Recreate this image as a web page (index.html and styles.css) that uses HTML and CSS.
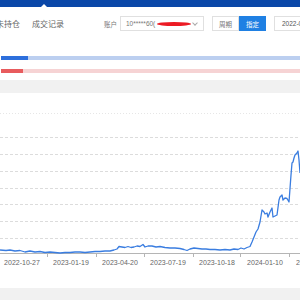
FILE: index.html
```html
<!DOCTYPE html>
<html lang="zh-CN">
<head>
  <meta charset="UTF-8">
  <meta name="viewport" content="width=device-width, initial-scale=1.0">
  <title>成交记录</title>
  <link rel="stylesheet" href="styles.css">
</head>
<body>

  <!-- Barra superior -->
  <div class="topbar">
    <span class="notch"></span>
  </div>

  <!-- Abas e filtros -->
  <div class="toolbar">
    <div class="tabs">
      <span class="tab">未持仓</span>
      <span class="tab">成交记录</span>
    </div>
    <span class="label">账户</span>
    <div class="select">
      <span class="select-text">10*****60(</span>
      <span class="redact"></span>
      <span class="chevron"></span>
    </div>
    <div class="btn-group">
      <button class="btn">周期</button>
      <button class="btn active">指定</button>
    </div>
    <div class="date-input">2022-01-01</div>
  </div>

  <!-- Barras de progresso -->
  <div class="progress">
    <div class="bar blue"><span class="fill" style="width: 27px"></span></div>
    <div class="bar red"><span class="fill" style="width: 22px"></span></div>
  </div>

  <div class="gap"></div>

  <!-- Gráfico -->
  <div class="chart">
    <svg width="300" height="195" viewBox="0 93 300 195">
      <line class="grid-top" x1="0" y1="113.5" x2="300" y2="113.5"/>
      <g class="grid">
        <line x1="0" y1="137.5" x2="300" y2="137.5"/>
        <line x1="0" y1="154.5" x2="300" y2="154.5"/>
        <line x1="0" y1="171.5" x2="300" y2="171.5"/>
        <line x1="0" y1="188.5" x2="300" y2="188.5"/>
        <line x1="0" y1="204.5" x2="300" y2="204.5"/>
        <line x1="0" y1="221.5" x2="300" y2="221.5"/>
        <line x1="0" y1="238.5" x2="300" y2="238.5"/>
      </g>
      <line class="axis" x1="0" y1="253.5" x2="300" y2="253.5"/>
      <g class="ticks">
        <line x1="47.5" y1="253.5" x2="47.5" y2="257"/>
        <line x1="96.5" y1="253.5" x2="96.5" y2="257"/>
        <line x1="144.5" y1="253.5" x2="144.5" y2="257"/>
        <line x1="193.5" y1="253.5" x2="193.5" y2="257"/>
        <line x1="240.5" y1="253.5" x2="240.5" y2="257"/>
        <line x1="289.5" y1="253.5" x2="289.5" y2="257"/>
      </g>
      <g class="labels">
        <text x="22" y="265">2022-10-27</text>
        <text x="71" y="265">2023-01-19</text>
        <text x="120" y="265">2023-04-20</text>
        <text x="168" y="265">2023-07-19</text>
        <text x="217" y="265">2023-10-18</text>
        <text x="265" y="265">2024-01-10</text>
        <text x="314" y="265">2024-04-10</text>
      </g>
      <polyline class="serie" points="0,250 6,250.5 10,250 15,251 20,250.5 25,252 30,251 35,252 40,251.5 45,252.5 50,252 55,252.5 60,253 65,252.5 70,252.5 75,252 80,252 85,252.5 90,252 95,251.5 100,251.5 105,251 110,251 114,250 117,249 119,246.5 122,247 125,247.5 128,246.5 131,247.5 134,247 137,246 140,246.5 143,244.5 145,247 148,246 152,246 156,247 160,246.5 165,247.5 170,248 175,248 180,248.5 184,249.5 187,250.5 190,249 194,248 198,248.5 202,249 206,249 210,249.5 215,249.5 220,250 225,249.5 230,250 234,249 238,249.5 241,248 244,249 247,247.5 250,246.5 252,242 254,237 256,232 258,229 260,222 262,210 264,212 265,214 267,213 268,217 270,212 272,208 273,217 275,216 277,215 279,200 280,197 282,195 283,200 285,198 287,198.5 289,202 291,175 292,163 293,162 294,158 295,155 297,153 298,151 299,160 300,173"/>
    </svg>
  </div>

  <div class="footer"></div>

</body>
</html>
```

FILE: styles.css
```css
/* Estilos gerais */
body {
  margin: 0;
  width: 300px;
  height: 300px;
  overflow: hidden;
  background-color: #fff;
  font-family: "Noto Sans CJK SC", "Liberation Sans", sans-serif;
  color: #666;
}

/* Barra superior */
.topbar {
  position: relative;
  height: 7px;
  background-color: #0a47a8;
}

.notch {
  position: absolute;
  left: 41px;
  bottom: 0;
  width: 0;
  height: 0;
  border-left: 3px solid transparent;
  border-right: 3px solid transparent;
  border-bottom: 3px solid #fff;
}

/* Abas e filtros */
.toolbar {
  display: flex;
  align-items: center;
  height: 33px;
  overflow: hidden;
  white-space: nowrap;
}

.tabs {
  display: flex;
  gap: 12px;
  margin-left: -4px;
  flex-shrink: 0;
}

.tab {
  font-size: 8px;
  line-height: 10px;
  color: #666;
}

.label {
  margin-left: 40px;
  margin-right: 3px;
  font-size: 6.5px;
  color: #777;
  flex-shrink: 0;
}

.select {
  display: flex;
  align-items: center;
  box-sizing: border-box;
  width: 84px;
  height: 15px;
  padding-left: 5px;
  border: 1px solid #e0e0e0;
  flex-shrink: 0;
}

.select-text {
  font-family: "Liberation Sans", sans-serif;
  font-size: 6.5px;
  color: #777;
}

.redact {
  display: inline-block;
  width: 34px;
  height: 4px;
  margin-left: 2px;
  background-color: #ec1b24;
  border-radius: 50%;
}

.chevron {
  display: inline-block;
  width: 3px;
  height: 3px;
  margin-left: 2px;
  margin-top: -2px;
  border-right: 1px solid #aaa;
  border-bottom: 1px solid #aaa;
  transform: rotate(45deg);
}

.btn-group {
  display: flex;
  margin-left: 8px;
  flex-shrink: 0;
}

.btn {
  box-sizing: border-box;
  width: 27px;
  height: 15px;
  padding: 0;
  border: 1px solid #e0e0e0;
  background-color: #fff;
  font-family: "Noto Sans CJK SC", sans-serif;
  font-size: 6.5px;
  color: #777;
}

.btn.active {
  border-color: #1f80e3;
  background-color: #1f80e3;
  color: #fff;
}

.date-input {
  box-sizing: border-box;
  width: 60px;
  height: 15px;
  margin-left: 8px;
  padding-left: 7px;
  border: 1px solid #e0e0e0;
  font-family: "Liberation Sans", sans-serif;
  font-size: 6.5px;
  line-height: 13px;
  color: #555;
  flex-shrink: 0;
}

/* Barras de progresso */
.progress {
  display: flex;
  flex-direction: column;
  gap: 9px;
  padding: 16px 0 7px 1px;
}

.bar {
  height: 4px;
}

.bar .fill {
  display: block;
  height: 100%;
}

.bar.blue {
  background-color: #bccff0;
}

.bar.blue .fill {
  background-color: #2d6fdc;
}

.bar.red {
  background-color: #f6d3d4;
}

.bar.red .fill {
  background-color: #e85b5d;
}

.gap {
  height: 13px;
  background-color: #f1f1f1;
}

/* Gráfico */
.chart {
  height: 195px;
}

.chart svg {
  display: block;
}

.grid-top {
  stroke: #e6e6e6;
  stroke-width: 1;
  stroke-dasharray: 1 2;
}

.grid line {
  stroke: #dcdcdc;
  stroke-width: 1;
  stroke-dasharray: 3 2;
}

.axis,
.ticks line {
  stroke: #b5b5b5;
  stroke-width: 1;
}

.labels text {
  font-family: "Liberation Sans", sans-serif;
  font-size: 7px;
  fill: #666;
  text-anchor: middle;
}

.serie {
  fill: none;
  stroke: #3a7de0;
  stroke-width: 1.3;
  stroke-linejoin: round;
}

.footer {
  height: 12px;
  background-color: #f1f1f1;
}
```
